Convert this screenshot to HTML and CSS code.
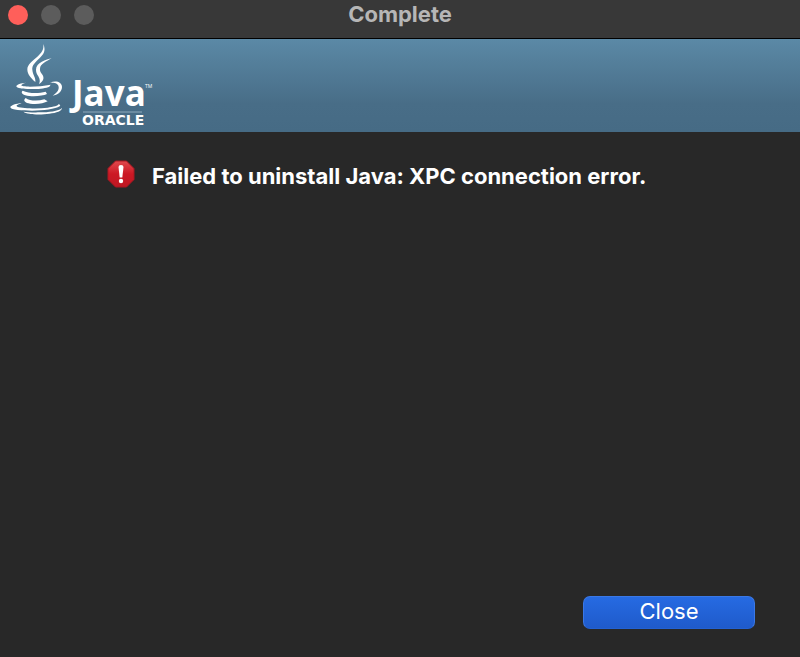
FILE: index.html
```html
<!DOCTYPE html>
<html lang="en">
<head>
<meta charset="utf-8">
<title>Complete</title>
<meta name="viewport" content="width=device-width, initial-scale=1">
<link rel="stylesheet" href="styles.css">
</head>
<body>
<div class="window">
  <header class="titlebar">
    <div class="controls">
      <button class="control control-close" type="button" aria-label="Close window"></button>
      <button class="control" type="button" aria-label="Minimize" disabled></button>
      <button class="control" type="button" aria-label="Zoom" disabled></button>
    </div>
    <h1 class="title">Complete</h1>
  </header>
  <div class="banner">
    <svg class="logo" viewBox="0 0 160 93" role="img" aria-label="Java, Oracle">
      <g transform="scale(.33333) translate(0 -9)" fill="#fff">
        <path d="M130 24C137 41 134 52 120 65C107 77 95 88 97 101C98 116 108 125 106 138C94 128 82 116 82 100C82 85 98 74 112 62C125 50 132 42 130 24Z"/>
        <path d="M155 67C139 70 108 80 108 101C108 117 118 119 119 132C120 137 118 141 117 144C128 137 133 129 129 119C125 111 119 108 120 98C121 83 140 76 155 67Z"/>
        <path d="M78 140C64 141 49 146 49 151C50 158 76 160 102 159C121 159 139 156 148 152L152 146C133 150 111 152 90 152C75 152 63 150 64 148C64 145 71 142 78 140Z"/>
        <path d="M150 141C166 132 186 138 186 153C186 168 172 177 158 179C169 172 177 164 176 153C175 143 164 139 150 141Z"/>
        <path d="M68 164C60 171 70 178 88 180C108 182 130 179 141 174L137 167C116 173 87 173 68 164Z"/>
        <path d="M77 186C67 194 76 201 91 203C111 206 132 202 143 196L133 190C113 196 89 195 77 186Z"/>
        <path d="M65 202C49 202 31 209 31 214C32 222 68 224 96 224C129 224 167 219 179 211C183 208 179 205 175 205C176 209 160 213 143 215C111 219 69 217 52 212C46 209 54 205 65 202Z"/>
        <path d="M186 216C176 226 145 229 119 229C99 230 80 228 70 227C82 236 121 237 148 233C170 231 186 225 186 216Z"/>
      </g>
      <text class="logo-java" x="72" y="67">Java</text>
      <text class="logo-tm" x="145" y="49">TM</text>
      <path d="M83 73H142" stroke="#8fabbd"/>
      <text class="logo-oracle" x="82" y="86">ORACLE</text>
    </svg>
  </div>
  <main class="content">
    <div class="message">
      <svg class="alert" viewBox="0 0 28 28" aria-hidden="true">
        <defs>
          <linearGradient id="red" x1="0" y1="0" x2="0" y2="1">
            <stop offset="0" stop-color="#e04a4e"/>
            <stop offset=".5" stop-color="#cc1824"/>
            <stop offset="1" stop-color="#be1823"/>
          </linearGradient>
        </defs>
        <path d="M8.500 1H19.500L27 8.500V19.500L19.500 27H8.500L1 19.500V8.500Z" fill="url(#red)" stroke="#a91620"/>
        <path d="M11.500 7Q11.500 5 14 5Q16.500 5 16.500 7L15.300 17.500H12.700Z" fill="#fff"/>
        <circle cx="14" cy="21" r="2.200" fill="#fff"/>
      </svg>
      <p class="text">Failed to uninstall Java: XPC connection error.</p>
    </div>
    <button class="close" type="button">Close</button>
  </main>
</div>
</body>
</html>
```

FILE: styles.css
```css
* {
  box-sizing: border-box;
}

body {
  margin: 0;
  background: #282828;
  color: #fff;
  font-family: Inter, "Liberation Sans", sans-serif;
}

.window {
  display: flex;
  flex-direction: column;
  min-height: 100vh;
}

.titlebar {
  display: grid;
  grid-template-columns: 1fr auto 1fr;
  align-items: start;
  padding: 0 8px 9px;
  background: #383838;
  border-bottom: 1px solid #000;
}

.controls {
  display: flex;
  gap: 13px;
  padding-top: 5px;
}

.control {
  width: 20px;
  height: 20px;
  padding: 0;
  border: 0;
  border-radius: 50%;
  background: #5c5c5c;
}

.control-close {
  background: #ff5f5a;
}

.title {
  margin: 0;
  color: #b6b6b6;
  font-size: 22px;
  font-weight: 700;
  line-height: 29px;
}

.banner {
  display: flex;
  background: linear-gradient(#5b89a6, #486d87 70%, #466b85);
}

.logo {
  width: 160px;
  height: 93px;
}

.logo text {
  fill: #fff;
}

.logo-java {
  font: 700 35px "Open Sans", sans-serif;
}

.logo-tm {
  font: 400 5px "Open Sans", sans-serif;
}

.logo-oracle {
  font: 700 14px "DejaVu Sans", sans-serif;
}

.content {
  display: flex;
  flex: 1;
  flex-direction: column;
  justify-content: space-between;
  padding: 28px 45px 28px 107px;
}

.message {
  display: flex;
  gap: 17px;
}

.alert {
  flex: none;
  width: 28px;
  height: 28px;
}

.text {
  margin: 0;
  font-size: 22px;
  font-weight: 700;
  line-height: 32px;
}

.close {
  align-self: flex-end;
  width: 172px;
  height: 33px;
  padding: 0 0 3px;
  border: 1px solid #3a78e6;
  border-bottom-color: #2361d2;
  border-radius: 7px;
  background: linear-gradient(#266ae2, #1f5bcb);
  color: #fff;
  font: 400 22px Inter, "Liberation Sans", sans-serif;
}
```
